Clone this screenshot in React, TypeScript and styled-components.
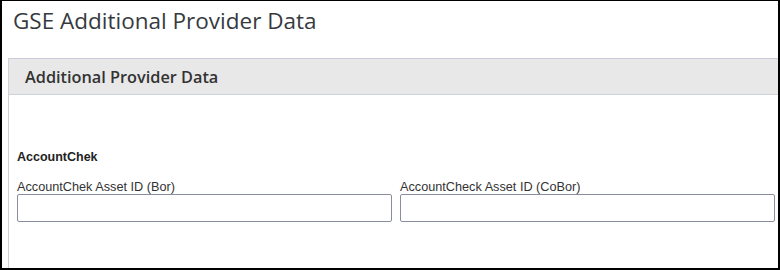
import styled, { createGlobalStyle } from 'styled-components'

const GlobalStyle = createGlobalStyle`
  html, body {
    margin: 0;
    padding: 0;
    background: #ffffff;
  }
`

const Frame = styled.div`
  box-sizing: border-box;
  width: 780px;
  height: 270px;
  border: 2px solid #000000;
  border-top-width: 1px;
  overflow: hidden;
  background: #ffffff;
`

const PageTitle = styled.h1`
  margin: 0;
  height: 57px;
  box-sizing: border-box;
  padding: 5px 0 0 11px;
  font-family: 'Open Sans', Lato, sans-serif;
  font-size: 22.5px;
  font-weight: 400;
  line-height: 30px;
  color: #363a3f;
`

const Panel = styled.section`
  margin-left: 6px;
  border-left: 1px solid #cfd2d8;
  height: 100%;
`

const PanelHeader = styled.div`
  height: 35px;
  box-sizing: content-box;
  border-top: 1px solid #cfcadb;
  border-bottom: 1px solid #cdd3d9;
  background: #e8e8e8;
  display: flex;
  align-items: center;
  padding-left: 16px;
  font-family: 'Open Sans', Lato, sans-serif;
  font-size: 16.3px;
  font-weight: 600;
  color: #333333;
`

const PanelBody = styled.div`
  padding: 54px 0 0 8px;
`

const GroupTitle = styled.h3`
  margin: 0 0 16px;
  font-family: 'Liberation Sans', Arial, sans-serif;
  font-size: 12.5px;
  font-weight: 700;
  line-height: 16px;
  color: #222222;
`

const FieldGrid = styled.div`
  display: grid;
  grid-template-columns: 375px 375px;
  column-gap: 8px;
`

const Field = styled.label`
  display: flex;
  flex-direction: column;
`

const FieldLabel = styled.span`
  font-family: 'Liberation Sans', Arial, sans-serif;
  font-size: 12.7px;
  line-height: 13px;
  color: #333333;
`

const TextInput = styled.input`
  box-sizing: border-box;
  height: 28px;
  width: 100%;
  margin: 0;
  border: 1px solid #8a8fa0;
  border-radius: 2px;
  padding: 0 6px;
  font-family: 'Liberation Sans', Arial, sans-serif;
  font-size: 12px;
  background: #ffffff;
  outline: none;
`

const fields = ['AccountChek Asset ID (Bor)', 'AccountCheck Asset ID (CoBor)']

export default function App() {
  return (
    <>
      <GlobalStyle />
      <Frame>
        <PageTitle>GSE Additional Provider Data</PageTitle>
        <Panel>
          <PanelHeader>Additional Provider Data</PanelHeader>
          <PanelBody>
            <GroupTitle>AccountChek</GroupTitle>
            <FieldGrid>
              {fields.map((f) => (
                <Field key={f}>
                  <FieldLabel>{f}</FieldLabel>
                  <TextInput type="text" />
                </Field>
              ))}
            </FieldGrid>
          </PanelBody>
        </Panel>
      </Frame>
    </>
  )
}
